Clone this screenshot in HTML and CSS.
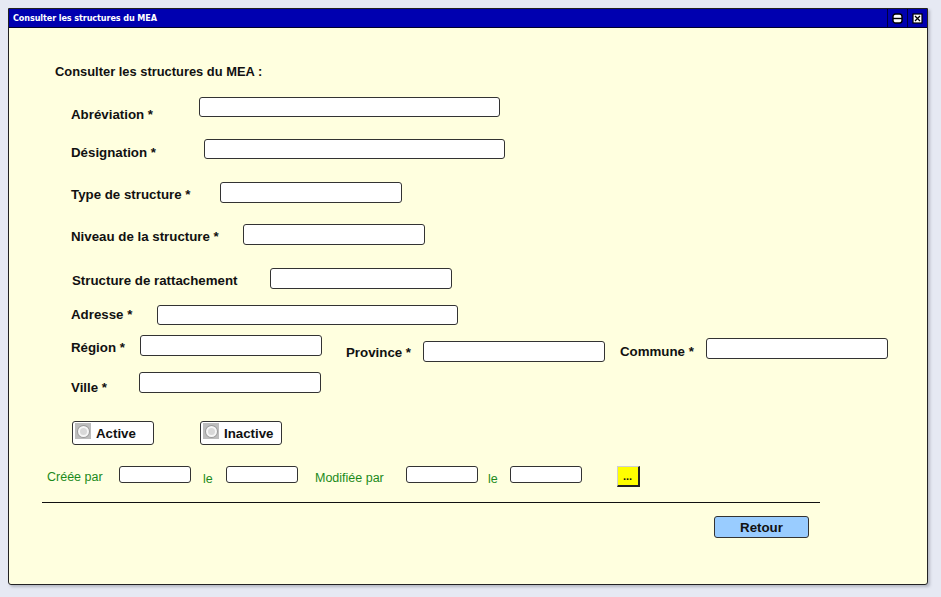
FILE: index.html
```html
<!DOCTYPE html>
<html lang="fr">
<head>
<meta charset="utf-8">
<title>Consulter les structures du MEA</title>
<link rel="stylesheet" href="styles.css">
</head>
<body>
<div class="window">
  <div class="titlebar">
    <span class="title">Consulter les structures du MEA</span>
    <div class="tb-buttons">
      <span class="tb-btn">
        <svg width="11" height="11" viewBox="0 0 11 11"><rect x="1" y="1" width="9" height="9" rx="2.5" fill="#fff" stroke="#000" stroke-width="1.4"/><line x1="1" y1="5.5" x2="10" y2="5.5" stroke="#000" stroke-width="1.4"/></svg>
      </span>
      <span class="tb-btn">
        <svg width="11" height="11" viewBox="0 0 11 11"><rect x="1" y="1" width="9" height="9" fill="#fff" stroke="#000" stroke-width="1.2"/><path d="M3 3 L8 8 M8 3 L3 8" stroke="#000" stroke-width="1.3"/></svg>
      </span>
    </div>
  </div>
  <div class="content">
    <h1 class="heading">Consulter les structures du MEA :</h1>

    <div class="row r-abrev">
      <span class="label l-abrev">Abréviation *</span>
      <span class="input w-long"></span>
    </div>
    <div class="row r-desig">
      <span class="label l-desig">Désignation *</span>
      <span class="input w-long"></span>
    </div>
    <div class="row r-type">
      <span class="label l-type">Type de structure *</span>
      <span class="input w-short tall"></span>
    </div>
    <div class="row r-niveau">
      <span class="label l-niveau">Niveau de la structure *</span>
      <span class="input w-short tall"></span>
    </div>
    <div class="row r-ratt">
      <span class="label l-ratt">Structure de rattachement</span>
      <span class="input w-short tall"></span>
    </div>
    <div class="row r-adresse">
      <span class="label l-adresse">Adresse *</span>
      <span class="input w-long"></span>
    </div>
    <div class="row r-region">
      <span class="label l-region">Région *</span>
      <span class="input w-short tall"></span>
      <span class="label l-province">Province *</span>
      <span class="input w-short tall i-province"></span>
      <span class="label l-commune">Commune *</span>
      <span class="input w-short tall i-commune"></span>
    </div>
    <div class="row r-ville">
      <span class="label l-ville">Ville *</span>
      <span class="input w-short tall"></span>
    </div>
    <div class="row r-radios">
      <span class="radio-btn"><span class="radio-ico"><span class="radio-circle"></span></span>Active</span>
      <span class="radio-btn rb-inactive"><span class="radio-ico"><span class="radio-circle"></span></span>Inactive</span>
    </div>
    <div class="row r-audit">
      <span class="glabel g-cree">Créée par</span>
      <span class="input small"></span>
      <span class="glabel g-le1">le</span>
      <span class="input small"></span>
      <span class="glabel g-modif">Modifiée par</span>
      <span class="input small"></span>
      <span class="glabel g-le2">le</span>
      <span class="input small"></span>
      <span class="dots">...</span>
    </div>
    <div class="rule"></div>
    <div class="row r-actions">
      <span class="btn-retour">Retour</span>
    </div>
  </div>
</div>
</body>
</html>
```

FILE: styles.css
```css
html, body {
  margin: 0;
  padding: 0;
}
body {
  background: #e6e9f3;
  width: 941px;
  height: 597px;
  overflow: hidden;
  font-family: "Liberation Sans", Arial, sans-serif;
  color: #111;
}
.window {
  margin: 8px 0 0 8px;
  width: 920px;
  height: 577px;
  box-sizing: border-box;
  border: 1px solid #222;
  border-radius: 0 0 3px 3px;
  background: #ffffdf;
  box-shadow: 2px 2px 3px rgba(90, 95, 110, 0.35);
  display: flex;
  flex-direction: column;
}
.titlebar {
  height: 18px;
  flex: none;
  background: #0000b0;
  border-bottom: 1px solid #000030;
  display: flex;
  align-items: center;
  justify-content: space-between;
}
.title {
  color: #fff;
  font-family: "DejaVu Sans Condensed", "DejaVu Sans", sans-serif;
  font-weight: bold;
  font-size: 9px;
  padding-left: 4px;
  letter-spacing: -0.1px;
}
.tb-buttons {
  display: flex;
  height: 100%;
}
.tb-btn {
  width: 19px;
  height: 18px;
  border-left: 1px solid #000040;
  display: flex;
  align-items: center;
  justify-content: center;
}
.tb-btn svg { display: block; }
.content {
  display: flex;
  flex-direction: column;
  align-items: flex-start;
}
.heading {
  margin: 36px 0 0 46px;
  height: 15px;
  font-size: 12.9px;
  line-height: 15px;
  font-weight: bold;
}
.row {
  display: flex;
  align-items: flex-start;
  flex: none;
}
.label {
  font-size: 13.3px;
  line-height: 15px;
  font-weight: bold;
  white-space: nowrap;
  flex: none;
}
.input {
  display: block;
  flex: none;
  height: 20px;
  box-sizing: border-box;
  background: #fff;
  border: 1px solid #333;
  border-radius: 3px;
}
.input.tall { height: 21px; }
.w-long { width: 301px; }
.w-short { width: 182px; }

.r-abrev { margin: 18px 0 0 62px; height: 20px; }
.l-abrev { width: 128px; padding-top: 10px; }
.r-desig { margin: 22px 0 0 62px; height: 20px; }
.l-desig { width: 133px; padding-top: 6px; }
.r-type { margin: 23px 0 0 62px; height: 21px; }
.l-type { width: 149px; padding-top: 5px; }
.r-niveau { margin: 21px 0 0 62px; height: 21px; }
.l-niveau { width: 172px; padding-top: 5px; }
.r-ratt { margin: 23px 0 0 63px; height: 21px; }
.l-ratt { width: 198px; padding-top: 5px; }
.r-adresse { margin: 16px 0 0 62px; height: 20px; }
.l-adresse { width: 86px; padding-top: 2px; }
.r-region { margin: 10px 0 0 62px; height: 21px; }
.l-region { width: 69px; padding-top: 5px; }
.l-province { width: 77px; margin-left: 24px; padding-top: 10px; }
.i-province { margin-top: 6px; }
.l-commune { width: 86px; margin-left: 15px; padding-top: 9px; }
.i-commune { margin-top: 3px; }
.r-ville { margin: 16px 0 0 62px; height: 21px; }
.l-ville { width: 68px; padding-top: 8px; }

.r-radios { margin: 28px 0 0 63px; height: 24px; }
.radio-btn {
  width: 82px;
  height: 24px;
  box-sizing: border-box;
  border: 1px solid #333;
  border-radius: 3px;
  background: #fff;
  display: flex;
  align-items: center;
  font-size: 13.3px;
  font-weight: bold;
  padding-left: 2px;
}
.rb-inactive { margin-left: 46px; }
.radio-ico {
  width: 16px;
  height: 16px;
  background: #bdbdbd;
  display: flex;
  align-items: center;
  justify-content: center;
  margin-right: 5px;
  align-self: flex-start;
  margin-top: 1px;
}
.radio-circle {
  width: 11px;
  height: 11px;
  box-sizing: border-box;
  border-radius: 50%;
  border: 2px solid #f6f6f6;
  background: #d8d8d8;
  box-shadow: 0 0 0 1px #9a9a9a;
}

.r-audit { margin: 21px 0 0 38px; height: 21px; }
.glabel {
  color: #1b8a1b;
  font-size: 12.5px;
  line-height: 14px;
  padding-top: 4px;
  flex: none;
}
.input.small { width: 72px; height: 17px; }
.g-cree { width: 72px; }
.g-le1 { width: 23px; margin-left: 12px; padding-top: 6px; }
.g-modif { width: 91px; margin-left: 17px; padding-top: 5px; }
.g-le2 { width: 22px; margin-left: 10px; padding-top: 6px; }
.dots {
  margin-left: 35px;
  width: 23px;
  height: 21px;
  box-sizing: border-box;
  background: #ffff00;
  border-top: 1px solid #cfcfcf;
  border-left: 1px solid #cfcfcf;
  border-right: 2px solid #222;
  border-bottom: 2px solid #222;
  font-size: 11px;
  font-weight: bold;
  line-height: 11px;
  padding: 4px 0 0 5px;
}
.rule {
  margin: 15px 0 0 33px;
  width: 778px;
  height: 1px;
  flex: none;
  background: #111;
}
.r-actions { margin: 13px 0 0 705px; height: 22px; }
.btn-retour {
  width: 95px;
  height: 22px;
  box-sizing: border-box;
  background: #99ccff;
  border: 1px solid #333;
  border-radius: 3px;
  font-size: 13.3px;
  font-weight: bold;
  display: flex;
  align-items: center;
  justify-content: center;
}
```
